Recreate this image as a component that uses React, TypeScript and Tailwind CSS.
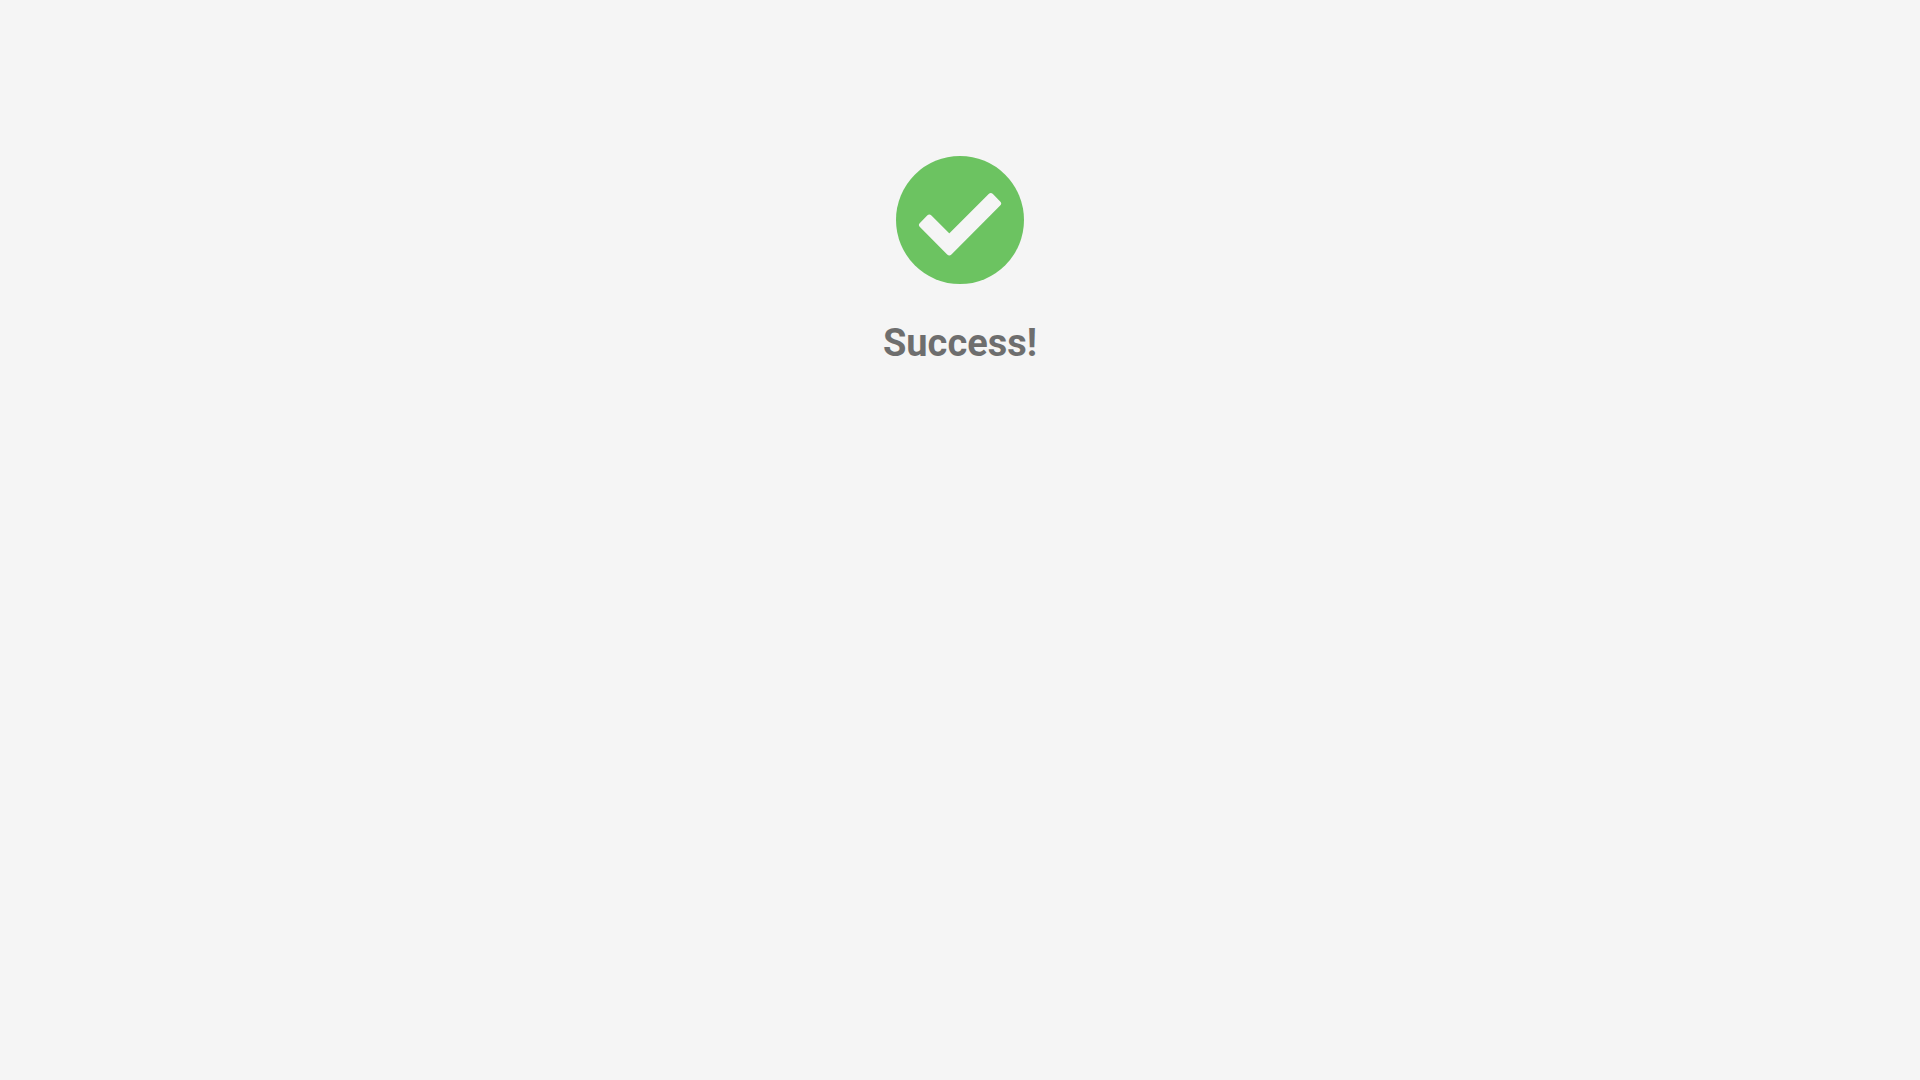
export default function App() {
  return (
    <div className="min-h-screen bg-[#f5f5f5] pt-[156px] flex flex-col items-center font-['Roboto',sans-serif]">
      <div className="w-32 h-32 rounded-full bg-[#6cc361] flex items-center justify-center">
        <svg width="128" height="128" viewBox="0 0 128 128">
          <path
            d="M26.04 69 L33.3 61.74 L53.3 81.74 L94.8 40.24 L102.06 47.5 L53.3 96.26 Z"
            fill="#f5f5f5"
            stroke="#f5f5f5"
            strokeWidth="6"
            strokeLinejoin="round"
          />
        </svg>
      </div>
      <h1 className="mt-[36px] text-[38px] leading-[46px] font-bold text-black opacity-55">Success!</h1>
    </div>
  );
}
